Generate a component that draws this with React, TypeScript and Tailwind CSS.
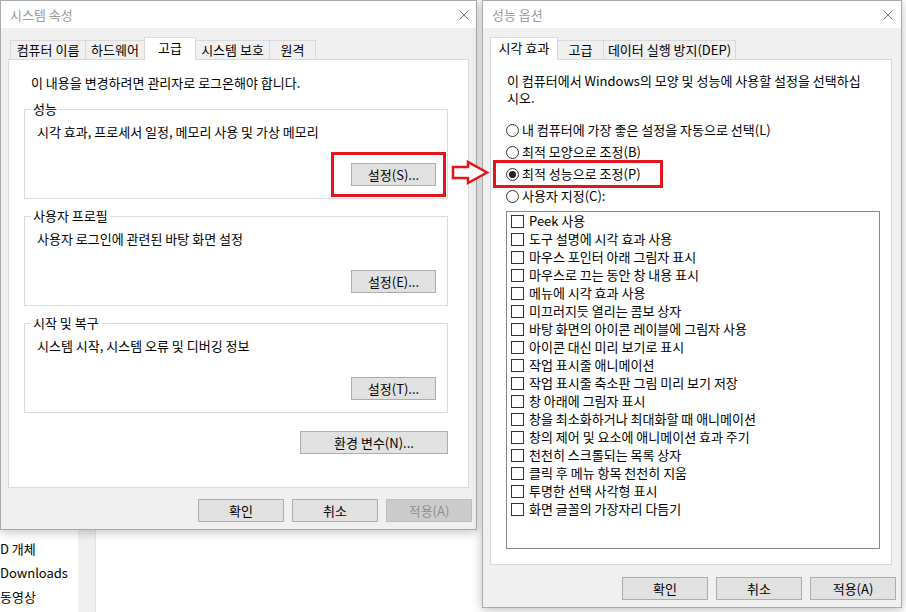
import React from 'react'

const red = 'border-[#e3141b]'

function CloseIcon() {
  return (
    <svg width="10" height="10" viewBox="0 0 10 10" className="block">
      <path d="M0.5 0.5 L9.5 9.5 M9.5 0.5 L0.5 9.5" stroke="#7a7a7a" strokeWidth="1" fill="none" />
    </svg>
  )
}

function TitleBar({ title, pr }: { title: string; pr: string }) {
  return (
    <div className={`h-[27px] bg-white flex items-center justify-between pl-[9px] ${pr}`}>
      <span className="text-[#9a9a9a] leading-[16px] pt-[1px]">{title}</span>
      <CloseIcon />
    </div>
  )
}

function Btn({ label, w, disabled }: { label: string; w: string; disabled?: boolean }) {
  return (
    <div
      className={`${w} h-[23px] border flex items-center justify-center leading-[16px] ${
        disabled ? 'bg-[#cccccc] border-[#bfbfbf] text-[#8f8f8f]' : 'bg-[#e1e1e1] border-[#adadad]'
      }`}
    >
      {label}
    </div>
  )
}

type TabDef = { label: string; w: string; active?: boolean }

function TabRow({ tabs, pl }: { tabs: TabDef[]; pl: string }) {
  return (
    <div className={`flex items-end h-[22px] ${pl}`}>
      {tabs.map((t, i) => (
        <div
          key={t.label}
          className={`${t.w} ${i > 0 ? '-ml-px' : ''} border border-b-0 border-[#d9d9d9] flex items-center justify-center leading-[16px] whitespace-nowrap ${
            t.active ? 'relative z-10 h-[23px] -mb-px bg-white pb-[2px]' : 'h-[19px] bg-[#f0f0f0]'
          }`}
        >
          {t.label}
        </div>
      ))}
    </div>
  )
}

function Group({ label, text, button }: { label: string; text: string; button: string }) {
  return (
    <div className="relative h-[90px] border border-[#dcdcdc] pl-[12px] pr-[11px] pt-[14px] flex flex-col">
      <span className="absolute -top-[9px] left-[6px] bg-white px-[2px] leading-[16px]">{label}</span>
      <p className="leading-[16px]">{text}</p>
      <div className="mt-[23px] flex justify-end">
        <Btn label={button} w="w-[85px]" />
      </div>
    </div>
  )
}

function Radio({ label, checked }: { label: string; checked?: boolean }) {
  return (
    <div className="h-[22px] flex items-center gap-[3px]">
      <span className="w-[13px] h-[13px] rounded-full border border-[#333333] bg-white flex items-center justify-center">
        {checked && <span className="w-[7px] h-[7px] rounded-full bg-[#222222]" />}
      </span>
      <span className="leading-[16px]">{label}</span>
    </div>
  )
}

function Check({ label }: { label: string }) {
  return (
    <div className="h-[18px] flex items-center gap-[5px]">
      <span className="w-[13px] h-[13px] border border-[#333333] bg-white" />
      <span className="leading-[16px] whitespace-nowrap">{label}</span>
    </div>
  )
}

const effects = [
  'Peek 사용',
  '도구 설명에 시각 효과 사용',
  '마우스 포인터 아래 그림자 표시',
  '마우스로 끄는 동안 창 내용 표시',
  '메뉴에 시각 효과 사용',
  '미끄러지듯 열리는 콤보 상자',
  '바탕 화면의 아이콘 레이블에 그림자 사용',
  '아이콘 대신 미리 보기로 표시',
  '작업 표시줄 애니메이션',
  '작업 표시줄 축소판 그림 미리 보기 저장',
  '창 아래에 그림자 표시',
  '창을 최소화하거나 최대화할 때 애니메이션',
  '창의 제어 및 요소에 애니메이션 효과 주기',
  '천천히 스크롤되는 목록 상자',
  '클릭 후 메뉴 항목 천천히 지움',
  '투명한 선택 사각형 표시',
  '화면 글꼴의 가장자리 다듬기',
]

function SystemProperties() {
  return (
    <div className="absolute left-0 top-0 w-[477px] h-[530px] border border-[#aaaaaa] bg-[#f0f0f0] flex flex-col shadow-[0_2px_10px_rgba(0,0,0,0.25)]">
      <TitleBar title="시스템 속성" pr="pr-[7px]" />
      <div className="flex flex-col px-[7px] pt-[9px]">
        <TabRow
          pl="pl-[2px]"
          tabs={[
            { label: '컴퓨터 이름', w: 'w-[76px]' },
            { label: '하드웨어', w: 'w-[60px]' },
            { label: '고급', w: 'w-[52px]', active: true },
            { label: '시스템 보호', w: 'w-[75px]' },
            { label: '원격', w: 'w-[47px]' },
          ]}
        />
        <div className="h-[429px] border border-[#d9d9d9] bg-white flex flex-col">
          <p className="pt-[15px] pl-[22px] leading-[16px]">이 내용을 변경하려면 관리자로 로그온해야 합니다.</p>
          <div className="ml-[15px] w-[424px] mt-[18px] flex flex-col">
            <div className="flex flex-col gap-[17px]">
              <Group label="성능" text="시각 효과, 프로세서 일정, 메모리 사용 및 가상 메모리" button="설정(S)..." />
              <Group label="사용자 프로필" text="사용자 로그인에 관련된 바탕 화면 설정" button="설정(E)..." />
              <Group label="시작 및 복구" text="시스템 시작, 시스템 오류 및 디버깅 정보" button="설정(T)..." />
            </div>
            <div className="mt-[18px] flex justify-end">
              <Btn label="환경 변수(N)..." w="w-[148px]" />
            </div>
          </div>
        </div>
      </div>
      <div className="mt-[11px] flex justify-end gap-[8px] pr-[4px]">
        <Btn label="확인" w="w-[86px]" />
        <Btn label="취소" w="w-[86px]" />
        <Btn label="적용(A)" w="w-[86px]" disabled />
      </div>
    </div>
  )
}

function PerformanceOptions() {
  return (
    <div className="absolute left-[482px] top-0 w-[420px] h-[608px] border border-[#aaaaaa] bg-[#f0f0f0] flex flex-col shadow-[0_2px_10px_rgba(0,0,0,0.25)]">
      <TitleBar title="성능 옵션" pr="pr-[8px]" />
      <div className="flex flex-col px-[7px] pt-[9px]">
        <TabRow
          pl="pl-0"
          tabs={[
            { label: '시각 효과', w: 'w-[68px]', active: true },
            { label: '고급', w: 'w-[47px]' },
            { label: '데이터 실행 방지(DEP)', w: 'w-[133px]' },
          ]}
        />
        <div className="w-[402px] h-[506px] border border-[#d9d9d9] bg-white flex flex-col pl-[15px]">
          <div className="pt-[12px] pl-[1px] flex flex-col">
            <p className="h-[17px] leading-[17px] whitespace-nowrap">이 컴퓨터에서 Windows의 모양 및 성능에 사용할 설정을 선택하십</p>
            <p className="h-[17px] leading-[17px]">시오.</p>
          </div>
          <div className="mt-[13px] flex flex-col">
            <Radio label="내 컴퓨터에 가장 좋은 설정을 자동으로 선택(L)" />
            <Radio label="최적 모양으로 조정(B)" />
            <Radio label="최적 성능으로 조정(P)" checked />
            <Radio label="사용자 지정(C):" />
          </div>
          <div className="mt-[4px] w-[374px] h-[338px] border border-[#828790] bg-white pl-[4px] flex flex-col">
            {effects.map((e) => (
              <Check key={e} label={e} />
            ))}
          </div>
        </div>
      </div>
      <div className="mt-[12px] flex justify-end gap-[8px] pr-[5px]">
        <Btn label="확인" w="w-[86px]" />
        <Btn label="취소" w="w-[86px]" />
        <Btn label="적용(A)" w="w-[86px]" />
      </div>
    </div>
  )
}

export default function App() {
  return (
    <div className="relative w-[906px] h-[612px] overflow-hidden bg-white flex font-['Noto_Sans_CJK_KR',sans-serif] text-[13px] text-black">
      {/* explorer window behind the dialogs */}
      <div className="w-[78px] flex flex-col justify-end pb-[3px]">
        <div className="h-[24px] leading-[24px] whitespace-nowrap">D 개체</div>
        <div className="h-[24px] leading-[24px] whitespace-nowrap">Downloads</div>
        <div className="h-[24px] leading-[24px] whitespace-nowrap">동영상</div>
      </div>
      <div className="w-[18px] bg-[#f0f0f0] border-r border-[#e5e5e5]" />
      <div className="flex-1 bg-white" />

      <SystemProperties />
      <PerformanceOptions />

      {/* annotations */}
      <div className={`absolute left-[331px] top-[152px] w-[115px] h-[45px] border-[3px] ${red}`} />
      <div className={`absolute left-[493px] top-[160px] w-[170px] h-[28px] border-[3px] ${red}`} />
      <svg className="absolute left-[451px] top-[160px]" width="40" height="26" viewBox="0 0 40 26">
        <polygon
          points="2,7 17,7 17,2 36,12.5 17,23 17,18 2,18"
          fill="#ffffff"
          stroke="#e3141b"
          strokeWidth="2.5"
          strokeLinejoin="miter"
        />
      </svg>
    </div>
  )
}
